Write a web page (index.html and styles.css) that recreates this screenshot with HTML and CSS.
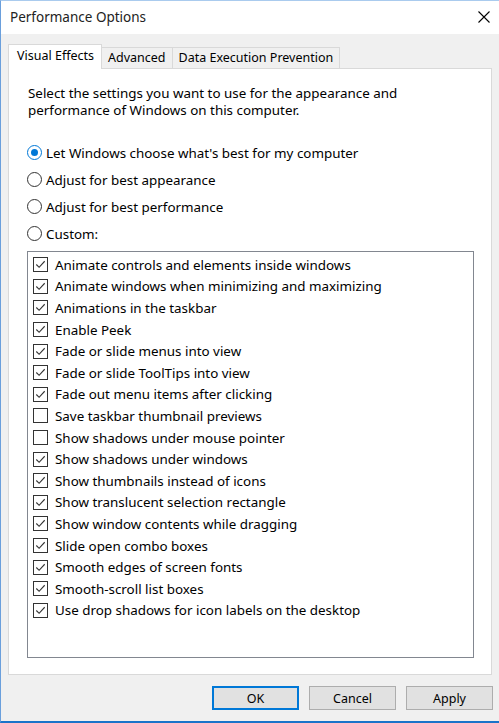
FILE: index.html
```html
<!DOCTYPE html>
<html>
<head>
<meta charset="utf-8">
<link rel="stylesheet" href="styles.css">
</head>
<body>
<div class="window">
  <div class="titlebar">
    <span class="title">Performance Options</span>
    <svg class="close" width="12" height="12" viewBox="0 0 12 12"><path d="M0.5 0.5 L11.5 11.5 M11.5 0.5 L0.5 11.5" stroke="#000" stroke-width="1.1" fill="none"/></svg>
  </div>
  <div class="body">
    <div class="tabs">
      <div class="tab active">Visual Effects</div>
      <div class="tab">Advanced</div>
      <div class="tab">Data Execution Prevention</div>
    </div>
    <div class="panel">
      <p class="desc">Select the settings you want to use for the appearance and<br>performance of Windows on this computer.</p>
      <div class="radios">
        <div class="radio-row"><span class="radio checked"></span>Let Windows choose what's best for my computer</div>
        <div class="radio-row"><span class="radio"></span>Adjust for best appearance</div>
        <div class="radio-row"><span class="radio"></span>Adjust for best performance</div>
        <div class="radio-row"><span class="radio"></span>Custom:</div>
      </div>
      <div class="listbox">
        <div class="row"><span class="cb"><svg viewBox="0 0 14 14"><path d="M2.5 7 L5.5 10 L11.5 3.5" /></svg></span>Animate controls and elements inside windows</div>
        <div class="row"><span class="cb"><svg viewBox="0 0 14 14"><path d="M2.5 7 L5.5 10 L11.5 3.5" /></svg></span>Animate windows when minimizing and maximizing</div>
        <div class="row"><span class="cb"><svg viewBox="0 0 14 14"><path d="M2.5 7 L5.5 10 L11.5 3.5" /></svg></span>Animations in the taskbar</div>
        <div class="row"><span class="cb"><svg viewBox="0 0 14 14"><path d="M2.5 7 L5.5 10 L11.5 3.5" /></svg></span>Enable Peek</div>
        <div class="row"><span class="cb"><svg viewBox="0 0 14 14"><path d="M2.5 7 L5.5 10 L11.5 3.5" /></svg></span>Fade or slide menus into view</div>
        <div class="row"><span class="cb"><svg viewBox="0 0 14 14"><path d="M2.5 7 L5.5 10 L11.5 3.5" /></svg></span>Fade or slide ToolTips into view</div>
        <div class="row"><span class="cb"><svg viewBox="0 0 14 14"><path d="M2.5 7 L5.5 10 L11.5 3.5" /></svg></span>Fade out menu items after clicking</div>
        <div class="row"><span class="cb"></span>Save taskbar thumbnail previews</div>
        <div class="row"><span class="cb"></span>Show shadows under mouse pointer</div>
        <div class="row"><span class="cb"><svg viewBox="0 0 14 14"><path d="M2.5 7 L5.5 10 L11.5 3.5" /></svg></span>Show shadows under windows</div>
        <div class="row"><span class="cb"><svg viewBox="0 0 14 14"><path d="M2.5 7 L5.5 10 L11.5 3.5" /></svg></span>Show thumbnails instead of icons</div>
        <div class="row"><span class="cb"><svg viewBox="0 0 14 14"><path d="M2.5 7 L5.5 10 L11.5 3.5" /></svg></span>Show translucent selection rectangle</div>
        <div class="row"><span class="cb"><svg viewBox="0 0 14 14"><path d="M2.5 7 L5.5 10 L11.5 3.5" /></svg></span>Show window contents while dragging</div>
        <div class="row"><span class="cb"><svg viewBox="0 0 14 14"><path d="M2.5 7 L5.5 10 L11.5 3.5" /></svg></span>Slide open combo boxes</div>
        <div class="row"><span class="cb"><svg viewBox="0 0 14 14"><path d="M2.5 7 L5.5 10 L11.5 3.5" /></svg></span>Smooth edges of screen fonts</div>
        <div class="row"><span class="cb"><svg viewBox="0 0 14 14"><path d="M2.5 7 L5.5 10 L11.5 3.5" /></svg></span>Smooth-scroll list boxes</div>
        <div class="row"><span class="cb"><svg viewBox="0 0 14 14"><path d="M2.5 7 L5.5 10 L11.5 3.5" /></svg></span>Use drop shadows for icon labels on the desktop</div>
      </div>
    </div>
    <div class="buttons">
      <div class="btn default">OK</div>
      <div class="btn">Cancel</div>
      <div class="btn">Apply</div>
    </div>
  </div>
</div>
</body>
</html>
```
FILE: styles.css
```css
html, body {
  margin: 0;
  padding: 0;
  background: #f0f0f0;
}
body {
  font-family: "Noto Sans", "Open Sans", sans-serif;
  font-size: 13.4px;
  color: #000;
}
.window {
  width: 498px;
  height: 720px;
  border-left: 1px solid #6a9fdc;
  border-top: 1px solid #aacbee;
  border-bottom: 2px solid #1a73c9;
  background: #f0f0f0;
  display: flex;
  flex-direction: column;
}
.titlebar {
  height: 33px;
  background: #fff;
  display: flex;
  align-items: center;
  justify-content: space-between;
  padding: 0 9px 0 9px;
  flex-shrink: 0;
}
.title {
  font-size: 13.5px;
  color: #222;
  margin-top: -1px;
}
.close {
  display: block;
  margin-top: -1px;
}
.body {
  flex: 1;
  padding: 11px 6px 0 7px;
  display: flex;
  flex-direction: column;
}
.tabs {
  display: flex;
  align-items: flex-end;
  height: 23px;
  position: relative;
  z-index: 1;
}
.tab {
  height: 20px;
  line-height: 20px;
  padding: 0 6px;
  border: 1px solid #d9d9d9;
  border-bottom: none;
  border-left: none;
  background: #f0f0f0;
  font-size: 12.5px;
}
.tab.active {
  line-height: 22px;
  background: #fff;
  border-left: 1px solid #d9d9d9;
  padding: 0 7px 0 8px;
  margin-bottom: -1px;
  height: 24px;
}
.panel {
  width: 482px;
  height: 605px;
  background: #fff;
  border: 1px solid #d9d9d9;
  padding: 0;
  flex-shrink: 0;
  display: flex;
  flex-direction: column;
}
.desc {
  margin: 16px 0 0 19px;
  line-height: 17px;
  color: #000;
}
.radios {
  margin: 20px 0 0 18px;
  display: flex;
  flex-direction: column;
}
.radio-row {
  height: 27px;
  display: flex;
  align-items: center;
}
.radio {
  width: 13px;
  height: 13px;
  border: 1px solid #333;
  border-radius: 50%;
  margin-right: 4px;
  position: relative;
  box-sizing: content-box;
  flex-shrink: 0;
}
.radio.checked {
  border-color: #0078d7;
}
.radio.checked::after {
  content: "";
  position: absolute;
  left: 3px;
  top: 3px;
  width: 7px;
  height: 7px;
  border-radius: 50%;
  background: #0078d7;
}
.listbox {
  margin: 4px 0 0 18px;
  width: 445px;
  height: 403px;
  border: 1px solid #828790;
  padding-top: 2px;
  box-sizing: content-box;
}
.row {
  height: 21.6px;
  display: flex;
  align-items: center;
  padding-left: 5px;
  white-space: nowrap;
}
.cb {
  width: 13px;
  height: 13px;
  border: 1px solid #333;
  margin-right: 7px;
  flex-shrink: 0;
  display: block;
}
.cb svg {
  display: block;
  width: 13px;
  height: 13px;
  fill: none;
  stroke: #333;
  stroke-width: 1.2;
}
.buttons {
  display: flex;
  justify-content: flex-end;
  gap: 10px;
  margin-top: 11px;
  padding-right: 0;
}
.btn {
  width: 85px;
  height: 22px;
  border: 1px solid #adadad;
  background: #e1e1e1;
  display: flex;
  align-items: center;
  justify-content: center;
  font-size: 12.5px;
}
.btn.default {
  border: 2px solid #0078d7;
  width: 83px;
  height: 20px;
}
```
